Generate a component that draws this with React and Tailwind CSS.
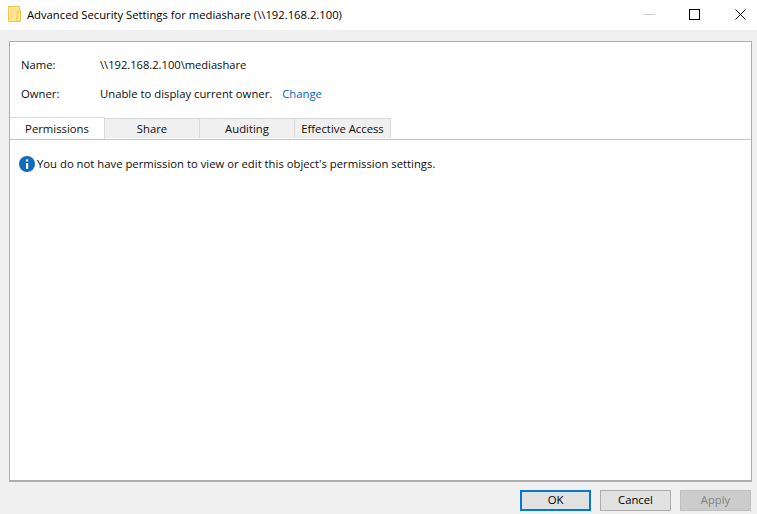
import React from "react";

function Tab({ label, w, active }) {
  return (
    <div
      className={
        active
          ? "h-[22px] flex items-center justify-center bg-white border-t border-r border-[#d9d9d9] relative z-10 -mb-px " + w
          : "h-[20px] mt-[1px] flex items-center justify-center bg-[#f0f0f0] border-t border-r border-[#d9d9d9] " + w
      }
    >
      {label}
    </div>
  );
}

export default function App() {
  return (
    <div className="w-[757px] h-[514px] bg-[#f0f0f0] flex flex-col overflow-hidden text-[11.3px] leading-[16px] text-[#0d0d0d] font-['Open_Sans','Liberation_Sans',sans-serif]">
      <div className="h-[30px] bg-white flex items-center shrink-0">
        <svg width="14" height="16" viewBox="0 0 14 16" className="ml-[8px] mt-[-2px]">
          <path d="M0.5 0.5H11.5V15.5H0.5Z" fill="#FFE38F" stroke="#F2C649" />
          <path d="M11.5 4.5H12.5V15.5H9V6H11.5Z" fill="#FFE38F" stroke="#F2C649" />
        </svg>
        <span className="ml-[5px] mt-[-1px] text-black text-[11.25px]">Advanced Security Settings for mediashare (\\192.168.2.100)</span>
        <div className="ml-auto flex items-center h-full">
          <svg width="11" height="1" viewBox="0 0 11 1" className="mr-[34px] mt-[-1px]">
            <rect width="11" height="1" fill="#cccccc" />
          </svg>
          <svg width="11" height="11" viewBox="0 0 11 11" className="mr-[35px] mt-[-1px]">
            <rect x="0.5" y="0.5" width="10" height="10" fill="none" stroke="#000" />
          </svg>
          <svg width="11" height="11" viewBox="0 0 11 11" className="mr-[11px] mt-[-1px]">
            <path d="M0.5 0.5L10.5 10.5M10.5 0.5L0.5 10.5" fill="none" stroke="#000" />
          </svg>
        </div>
      </div>
      <div className="ml-[9px] mr-[5px] mt-[11px] h-[441px] bg-white border border-b-2 border-[#adadad] flex flex-col">
        <div className="flex pl-[11px] pt-[15px]">
          <span className="w-[79px]">Name:</span>
          <span className="text-[11.15px]">\\192.168.2.100\mediashare</span>
        </div>
        <div className="flex pl-[11px] pt-[13px]">
          <span className="w-[79px]">Owner:</span>
          <span>Unable to display current owner.</span>
          <span className="ml-[10px] text-[#0066cc]">Change</span>
        </div>
        <div className="flex items-start h-[22px] mt-[15px] border-b border-[#c4c4c4] box-content">
          <Tab label="Permissions" w="w-[95px]" active />
          <Tab label="Share" w="w-[95px]" />
          <Tab label="Auditing" w="w-[95px]" />
          <Tab label="Effective Access" w="w-[96px]" />
        </div>
        <div className="flex items-center pl-[9px] pt-[16px]">
          <svg width="16" height="16" viewBox="0 0 16 16">
            <circle cx="8" cy="8" r="8" fill="#0F6CBD" />
            <rect x="7" y="7" width="2.2" height="6" fill="#fff" />
            <rect x="7" y="3.4" width="2.2" height="2" fill="#fff" />
          </svg>
          <span className="ml-[2px]">You do not have permission to view or edit this object's permission settings.</span>
        </div>
      </div>
      <div className="flex justify-end pt-[8px] pr-[6px] gap-[9px]">
        <button className="w-[71px] h-[21px] pb-px bg-[#e1e1e1] border-2 border-[#0078d7] text-black flex items-center justify-center">OK</button>
        <button className="w-[71px] h-[21px] pb-px bg-[#e1e1e1] border border-[#adadad] text-black flex items-center justify-center">Cancel</button>
        <button className="w-[71px] h-[21px] pb-px bg-[#cccccc] border border-[#bfbfbf] text-[#838383] flex items-center justify-center">Apply</button>
      </div>
    </div>
  );
}
